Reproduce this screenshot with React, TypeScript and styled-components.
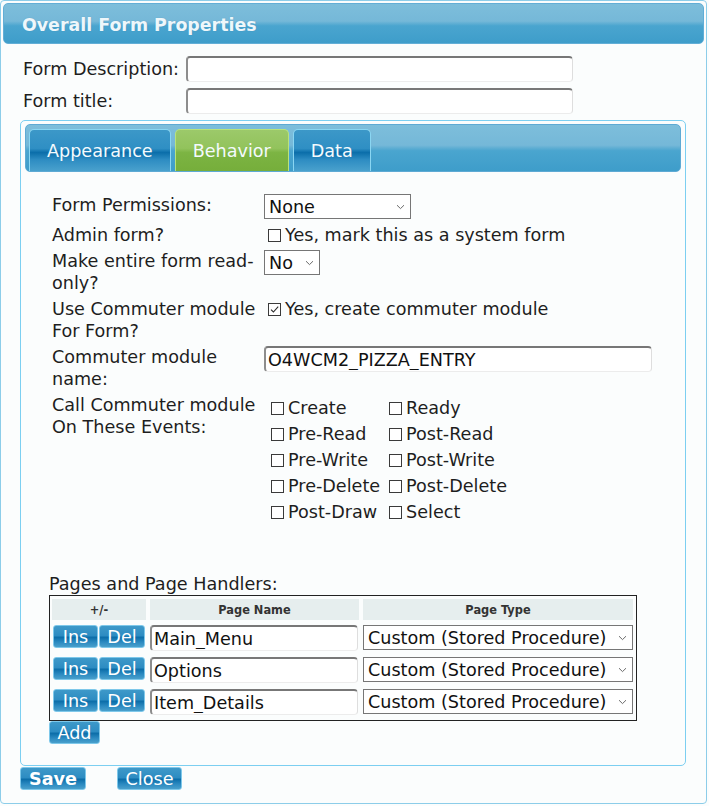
import styled, { createGlobalStyle } from "styled-components";

const GlobalStyle = createGlobalStyle`
  body {
    margin: 0;
    background: #fbfdfd;
    font-family: "DejaVu Sans", Verdana, sans-serif;
    color: #1e1e1e;
  }
`;

const events: [string, string][] = [
  ["Create", "Ready"],
  ["Pre-Read", "Post-Read"],
  ["Pre-Write", "Post-Write"],
  ["Pre-Delete", "Post-Delete"],
  ["Post-Draw", "Select"],
];

const pages = ["Main_Menu", "Options", "Item_Details"];

const Chevron = () => (
  <ChevronIcon width="9" height="6" viewBox="0 0 9 6">
    <path d="M1 1.2 L4.5 4.6 L8 1.2" fill="none" stroke="#6a6a6a" strokeWidth="1" />
  </ChevronIcon>
);

const Select = ({ value, width }: { value: string; width: number }) => (
  <SelectWrap>
    <SelectBox $width={width} defaultValue={value}>
      <option>{value}</option>
    </SelectBox>
    <Chevron />
  </SelectWrap>
);

const Check = ({ label, checked }: { label: string; checked?: boolean }) => (
  <CheckItem>
    <CheckBox>
      {checked && (
        <svg width="11" height="11" viewBox="0 0 11 11">
          <path d="M2 5.6 L4.4 8 L9.2 2.6" fill="none" stroke="#2a2a2a" strokeWidth="1.1" />
        </svg>
      )}
    </CheckBox>
    {label}
  </CheckItem>
);

const App = () => {
  return (
    <>
      <GlobalStyle />
      <Dialog>
        <TitleBar>Overall Form Properties</TitleBar>
        <Body>
          <TopField>
            <TopLabel>Form Description:</TopLabel>
            <TextInput $width={387} defaultValue="" />
          </TopField>
          <TopField>
            <TopLabel>Form title:</TopLabel>
            <TextInput $width={387} defaultValue="" />
          </TopField>

          <TabsBox>
            <TabBar>
              <Tab>Appearance</Tab>
              <Tab $active>Behavior</Tab>
              <Tab>Data</Tab>
            </TabBar>
            <Panel>
              <FormGrid>
                <Label>Form Permissions:</Label>
                <div>
                  <Select value="None" width={147} />
                </div>

                <Label $pad>Admin form?</Label>
                <Value $pad>
                  <Check label="Yes, mark this as a system form" />
                </Value>

                <Label>
                  Make entire form read-
                  <br />
                  only?
                </Label>
                <div>
                  <Select value="No" width={56} />
                </div>

                <Label>
                  Use Commuter module
                  <br />
                  For Form?
                </Label>
                <Value>
                  <Check label="Yes, create commuter module" checked />
                </Value>

                <Label>
                  Commuter module
                  <br />
                  name:
                </Label>
                <div>
                  <TextInput $width={388} defaultValue="O4WCM2_PIZZA_ENTRY" />
                </div>

                <Label>
                  Call Commuter module
                  <br />
                  On These Events:
                </Label>
                <EventGrid>
                  {events.map(([a, b]) => (
                    <>
                      <Check key={a} label={a} />
                      <Check key={b} label={b} />
                    </>
                  ))}
                </EventGrid>
              </FormGrid>

              <SectionLabel>Pages and Page Handlers:</SectionLabel>
              <PageTable>
                <HeadCell>+/-</HeadCell>
                <HeadCell>Page Name</HeadCell>
                <HeadCell>Page Type</HeadCell>
                {pages.map((p) => (
                  <>
                    <ButtonPair key={p + "-btn"}>
                      <Button $w={45}>Ins</Button>
                      <Button $w={46}>Del</Button>
                    </ButtonPair>
                    <TextInput key={p} $width={208} defaultValue={p} />
                    <Select key={p + "-type"} value="Custom (Stored Procedure)" width={270} />
                  </>
                ))}
              </PageTable>
              <Button $w={51}>Add</Button>
            </Panel>
          </TabsBox>

          <Footer>
            <Button $w={66} $bold>
              Save
            </Button>
            <Button $w={65}>Close</Button>
          </Footer>
        </Body>
      </Dialog>
    </>
  );
};

const Dialog = styled.div`
  width: 707px;
  height: 804px;
  box-sizing: border-box;
  border: 1px solid #8ccde9;
  border-radius: 4px;
  padding: 2px;
  background: #fbfdfd;
`;

const TitleBar = styled.div`
  height: 41px;
  box-sizing: border-box;
  display: flex;
  align-items: center;
  padding: 2px 0 0 18px;
  border: 1px solid #62aed6;
  border-radius: 5px;
  background: linear-gradient(
    to bottom,
    #7dbedb 0%,
    #75b8d8 44%,
    #4aa5cf 56%,
    #3e9dca 100%
  );
  color: #eef7fb;
  font-weight: bold;
  font-size: 17.4px;
  text-shadow: 0 0 1px rgba(40, 110, 150, 0.4);
`;

const Body = styled.div`
  padding: 12px 18px 0 17px;
`;

const TopField = styled.div`
  display: grid;
  grid-template-columns: 166px auto;
  align-items: center;
  margin-bottom: 6px;
`;

const TopLabel = styled.span`
  padding-left: 3px;
  font-size: 17.6px;
`;

const TextInput = styled.input<{ $width: number }>`
  width: ${(p) => p.$width}px;
  height: 26px;
  box-sizing: border-box;
  padding: 0 0 0 2px;
  border-style: solid;
  border-width: 2px 1px 1px 2px;
  border-color: #777777 #dedede #ececec #8d8d8d;
  border-radius: 4px;
  background: #ffffff;
  font-family: "DejaVu Sans", Verdana, sans-serif;
  font-size: 17.6px;
  color: #111;
  outline: none;
`;

const TabsBox = styled.div`
  width: 666px;
  box-sizing: border-box;
  border: 1px solid #7ccff1;
  border-radius: 5px;
  padding: 3px 4px 21px 4px;
`;

const TabBar = styled.div`
  height: 48px;
  box-sizing: border-box;
  display: flex;
  align-items: flex-end;
  gap: 4px;
  padding-left: 3px;
  border: 1px solid #5eaad4;
  border-radius: 5px;
  background: linear-gradient(
    to bottom,
    #7dbedb 0%,
    #75b8d8 44%,
    #4aa5cf 56%,
    #3e9dca 100%
  );
`;

const Tab = styled.div<{ $active?: boolean }>`
  height: 42px;
  box-sizing: border-box;
  display: flex;
  align-items: center;
  padding: 1px 17px 0;
  border: 1px solid ${(p) => (p.$active ? "#b9e27c" : "#8ad6f2")};
  border-bottom: none;
  border-radius: 5px 5px 0 0;
  color: #f4fafd;
  font-size: 17.6px;
  background: ${(p) =>
    p.$active
      ? "linear-gradient(to bottom, #9cc96a 0%, #92c35c 45%, #7cb443 55%, #76ae3b 100%)"
      : "linear-gradient(to bottom, #3c98c8 0%, #2f8fc4 45%, #0b6eaa 55%, #2d8cc2 72%, #4aa1cd 100%)"};
`;

const Panel = styled.div`
  padding: 22px 0 0 24px;
`;

const FormGrid = styled.div`
  display: grid;
  grid-template-columns: 212px auto;
  row-gap: 4px;
  margin-left: 3px;
  align-items: start;
`;

const Label = styled.div<{ $pad?: boolean }>`
  font-size: 17.6px;
  line-height: 22px;
  padding-top: ${(p) => (p.$pad ? 1 : 0)}px;
`;

const Value = styled.div<{ $pad?: boolean }>`
  height: 22px;
  display: flex;
  align-items: center;
  padding: ${(p) => (p.$pad ? 1 : 0)}px 0 0 4px;
`;

const SelectWrap = styled.div`
  position: relative;
  display: inline-block;
`;

const SelectBox = styled.select<{ $width: number }>`
  appearance: none;
  width: ${(p) => p.$width}px;
  height: 25px;
  box-sizing: border-box;
  padding: 0 20px 0 4px;
  border: 1px solid #767676;
  border-radius: 0;
  background: #ffffff;
  font-family: "DejaVu Sans", Verdana, sans-serif;
  font-size: 17.6px;
  color: #111;
  outline: none;
  display: block;
`;

const ChevronIcon = styled.svg`
  position: absolute;
  right: 6px;
  top: 10px;
  pointer-events: none;
`;

const CheckItem = styled.span`
  display: inline-flex;
  align-items: center;
  gap: 4px;
  font-size: 17.6px;
  line-height: 22px;
  white-space: nowrap;
`;

const CheckBox = styled.span`
  width: 13px;
  height: 13px;
  box-sizing: border-box;
  border: 1px solid #3a3a3a;
  background: #ffffff;
  display: inline-flex;
  align-items: center;
  justify-content: center;
`;

const EventGrid = styled.div`
  display: grid;
  grid-template-columns: 118px auto;
  grid-auto-rows: 26px;
  align-items: center;
  padding: 1px 0 0 7px;
`;

const SectionLabel = styled.div`
  margin-top: 48px;
  font-size: 17.6px;
  line-height: 22px;
`;

const PageTable = styled.div`
  width: 588px;
  box-sizing: border-box;
  display: grid;
  grid-template-columns: 94px 209px 270px;
  grid-template-rows: 21px repeat(3, 27px);
  column-gap: 4px;
  row-gap: 5px;
  padding: 3px 3px 4px 2px;
  border: 1px solid #222222;
  align-items: start;
`;

const HeadCell = styled.div`
  height: 21px;
  display: flex;
  align-items: center;
  justify-content: center;
  background: #e6eeee;
  font-size: 11.4px;
  font-weight: bold;
  color: #333333;
`;

const ButtonPair = styled.div`
  display: flex;
  gap: 1px;
  padding-left: 1px;
`;

const Button = styled.button<{ $w: number; $bold?: boolean }>`
  width: ${(p) => p.$w}px;
  height: 23px;
  box-sizing: border-box;
  padding: 0;
  border: 1px solid #7ec8ea;
  border-radius: 3px;
  background: linear-gradient(
    to bottom,
    #3e99c9 0%,
    #2d8cc2 46%,
    #0c6ea9 54%,
    #2a89c0 76%,
    #49a0cc 100%
  );
  color: #ffffff;
  font-family: "DejaVu Sans", Verdana, sans-serif;
  font-size: 17.6px;
  font-weight: ${(p) => (p.$bold ? "bold" : "normal")};
  line-height: 20px;
  cursor: pointer;
`;

const Footer = styled.div`
  display: flex;
  gap: 31px;
  margin-top: 1px;
`;

export default App;
